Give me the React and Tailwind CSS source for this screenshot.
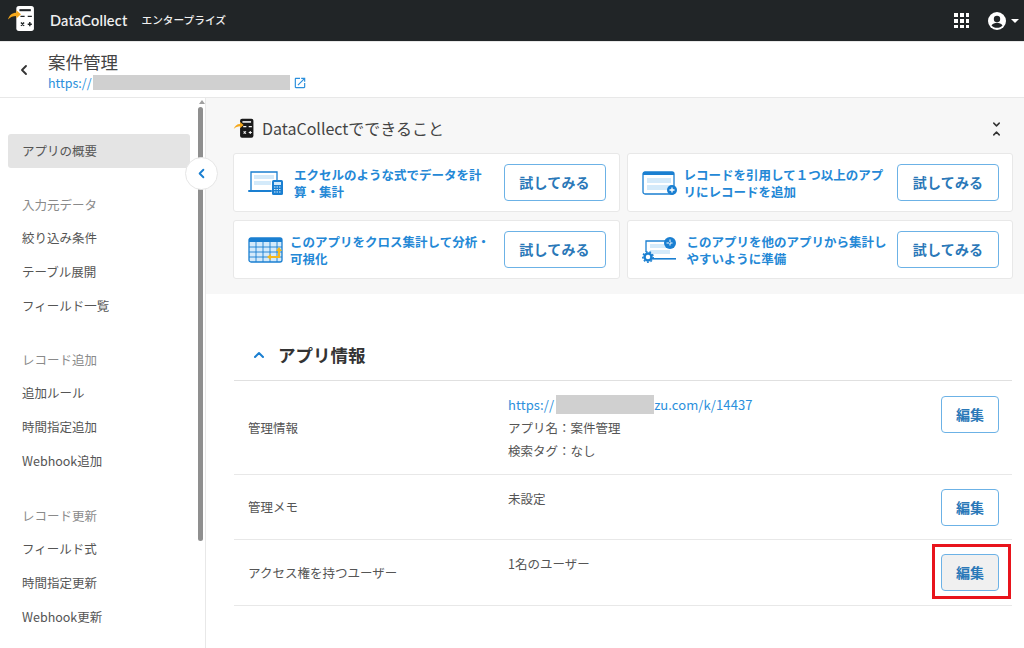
import React from 'react';
import { ChevronLeft, ChevronUp, ChevronDown } from 'lucide-react';

const jp = "font-['Noto_Sans_CJK_JP','Noto_Sans',sans-serif]";

function CalcLogo({ className, body = '#ffffff', key_ = '#212527' }) {
    return (
        <svg viewBox="0 0 28 28" className={className}>
            <rect x="9" y="1" width="17" height="24" rx="2.5" fill={body} />
            <rect x="12" y="4" width="11" height="2" fill={key_} />
            <path d="M13 11h4M20 11h4M13.5 17l3 3M16.5 17l-3 3M20 18.5h4M22 16.5v4" stroke={key_} strokeWidth="1.4" fill="none" />
            <path d="M1 14c1-4 4-6.500 8-6.500V5l4.500 4L9 13v-2.500c-3 0-6 1-8 3.500z" fill="#f5a81c" />
        </svg>
    );
}

function SheetIcon() {
    return (
        <svg viewBox="0 0 36 26" className="w-[36px] h-[26px] shrink-0">
            <path d="M3 20V2h26v8" stroke="#1a7fd1" strokeWidth="1.300" fill="none" />
            <rect x="6" y="5" width="20" height="4" fill="#d4eafa" />
            <rect x="6" y="11" width="17" height="4" fill="#d4eafa" />
            <rect x="0" y="20" width="24" height="2" rx="1" fill="#1a7fd1" />
            <rect x="24" y="10" width="11" height="15" rx="1.500" fill="#1a7fd1" />
            <rect x="26" y="12" width="7" height="3" fill="#d4eafa" />
            <path d="M26 17h7M26 19.500h7M26 22h7" stroke="#d4eafa" strokeWidth="1.200" strokeDasharray="1.500 1" />
        </svg>
    );
}

function RecordIcon() {
    return (
        <svg viewBox="0 0 36 26" className="w-[36px] h-[26px] shrink-0">
            <rect x="1" y="2" width="31" height="22" rx="2" fill="#ffffff" stroke="#1a7fd1" strokeWidth="1.300" />
            <rect x="1" y="2" width="31" height="3" fill="#1a7fd1" />
            <rect x="5" y="8" width="24" height="5" fill="#d4eafa" />
            <rect x="5" y="15" width="24" height="5" fill="#d4eafa" />
            <circle cx="30" cy="20" r="5" fill="#1a7fd1" />
            <path d="M27.500 20h5M30 17.500v5" stroke="#fff" strokeWidth="1.300" />
        </svg>
    );
}

function TableIcon() {
    return (
        <svg viewBox="0 0 36 26" className="w-[36px] h-[26px] shrink-0">
            <rect x="1" y="1" width="33" height="24" rx="2" fill="#d4eafa" stroke="#1a7fd1" strokeWidth="1.300" />
            <rect x="1" y="1" width="33" height="4" fill="#1a7fd1" />
            <path d="M1 10h33M1 15h33M1 20h33M8 5v20M15 5v20M22 5v20M29 5v20" stroke="#1a7fd1" strokeWidth="0.900" />
            <path d="M21 20h10v-7" stroke="#f5b81c" strokeWidth="2.200" fill="none" />
            <path d="M28 14l3-4 3 4zM23 17v6l-4-3z" fill="#f5b81c" />
        </svg>
    );
}

function PrepareIcon() {
    return (
        <svg viewBox="0 0 36 26" className="w-[36px] h-[26px] shrink-0">
            <path d="M4 15V4h22" stroke="#1a7fd1" strokeWidth="1.300" fill="none" />
            <rect x="8" y="7" width="20" height="4" fill="#d4eafa" />
            <rect x="8" y="13" width="20" height="4" fill="#d4eafa" />
            <rect x="8" y="21" width="26" height="1.600" fill="#1a7fd1" />
            <circle cx="28" cy="6" r="6" fill="#1a7fd1" />
            <path d="M24.500 6h7M28 2.500v7" stroke="#fff" strokeWidth="1" strokeDasharray="2.500 1" />
            <circle cx="6" cy="20" r="3.500" fill="none" stroke="#1a7fd1" strokeWidth="2.500" />
            <circle cx="6" cy="20" r="5.200" fill="none" stroke="#1a7fd1" strokeWidth="1.500" strokeDasharray="1.800 1.800" />
        </svg>
    );
}

function OpenInNewIcon() {
    return (
        <svg viewBox="0 0 24 24" className="w-[14px] h-[14px] ml-[3px] shrink-0" fill="#2b8fdc">
            <path d="M19 19H5V5h7V3H5c-1.110 0-2 .9-2 2v14c0 1.100.89 2 2 2h14c1.100 0 2-.9 2-2v-7h-2v7zM14 3v2h3.590l-9.830 9.830 1.410 1.410L19 6.410V10h2V3h-7z" />
        </svg>
    );
}

function GridIcon() {
    const cells = [0, 6, 12];
    return (
        <svg viewBox="0 0 15 15" className="w-[15px] h-[15px]">
            {cells.map((y) => cells.map((x) => <rect key={`${x}-${y}`} x={x} y={y} width="4" height="4" fill="#ffffff" />))}
        </svg>
    );
}

function UserIcon() {
    return (
        <svg viewBox="0 0 18 18" className="w-[18px] h-[18px]">
            <circle cx="9" cy="9" r="9" fill="#ffffff" />
            <circle cx="9" cy="7" r="3.200" fill="#212527" />
            <path d="M3.500 13.500c1-2 3.500-2.800 5.500-2.800s4.500.8 5.500 2.800c-1.300 1.500-3.300 2.300-5.500 2.300s-4.200-.8-5.500-2.300z" fill="#212527" />
        </svg>
    );
}

function Header() {
    return (
        <header className="h-[41px] shrink-0 bg-[#212527] flex items-center pl-[7px] pr-[5px] text-white">
            <CalcLogo className="w-[29px] h-[29px] mt-[-2px]" />
            <span className="ml-[14px] text-[14.500px] font-semibold font-['Lato','Noto_Sans',sans-serif] text-[#f0f0f0] tracking-[0.2px]">DataCollect</span>
            <span className={`ml-[14px] text-[10.700px] font-medium text-[#f0f0f0] ${jp}`}>エンタープライズ</span>
            <div className="ml-auto flex items-center">
                <GridIcon />
                <div className="ml-[19px]"><UserIcon /></div>
                <div className="ml-[5px] w-0 h-0 border-x-[4px] border-x-transparent border-t-[4px] border-t-white" />
            </div>
        </header>
    );
}

function TitleBar() {
    return (
        <div className="h-[57px] shrink-0 bg-white border-t border-b border-[#e8e8e8] flex items-center pl-[16px]">
            <ChevronLeft size={16} strokeWidth={2.800} className="text-[#333333]" />
            <div className="ml-[16px] mt-[2px]">
                <div className={`text-[17.500px] leading-[23px] text-[#444444] ${jp}`}>案件管理</div>
                <div className={`mt-[2px] flex items-center text-[12.500px] leading-[16px] text-[#2b8fdc] ${jp}`}>
                    <span>https://</span>
                    <span className="w-[197px] h-[15px] ml-[1px] mt-[-1px] bg-[#d0d0d0]" />
                    <OpenInNewIcon />
                </div>
            </div>
        </div>
    );
}

function SideItem({ label, active, muted }) {
    const color = muted ? 'text-[#8a8a8a]' : 'text-[#555555]';
    const bg = active ? 'bg-[#e4e4e4] rounded-[3px]' : '';
    const height = muted ? 'h-[32px]' : 'h-[34px]';
    return (
        <div className={`${height} w-[182px] ml-[8px] pl-[14px] flex items-center text-[12.500px] ${color} ${bg}`}>{label}</div>
    );
}

function Sidebar() {
    return (
        <aside className={`relative w-[206px] shrink-0 bg-white border-r border-[#e8e8e8] pt-[36px] ${jp}`}>
            <SideItem label="アプリの概要" active />
            <div className="h-[21px]" />
            <SideItem label="入力元データ" muted />
            <SideItem label="絞り込み条件" />
            <SideItem label="テーブル展開" />
            <SideItem label="フィールド一覧" />
            <div className="h-[21px]" />
            <SideItem label="レコード追加" muted />
            <SideItem label="追加ルール" />
            <SideItem label="時間指定追加" />
            <SideItem label="Webhook追加" />
            <div className="h-[22px]" />
            <SideItem label="レコード更新" muted />
            <SideItem label="フィールド式" />
            <SideItem label="時間指定更新" />
            <SideItem label="Webhook更新" />
            {/* scrollbar */}
            <div className="absolute left-[199px] top-[2px] w-0 h-0 border-x-[3px] border-x-transparent border-b-[4px] border-b-[#a0a0a0]" />
            <div className="absolute left-[198px] top-[9px] w-[5px] h-[434px] rounded-full bg-[#8f8f8f]" />
            {/* collapse button */}
            <div className="absolute left-[185px] top-[59px] w-[33px] h-[33px] rounded-full bg-white border border-[#e6e6e6] flex items-center justify-center z-10">
                <ChevronLeft size={15} strokeWidth={3} className="text-[#1a7fd1]" />
            </div>
        </aside>
    );
}

function TryButton({ label }) {
    return (
        <button className="w-[102px] h-[37px] shrink-0 rounded-[4px] border border-[#6cb2e6] bg-white text-[14px] font-bold tracking-[0.2px] text-[#2a78b8]">{label}</button>
    );
}

function FeatureCard({ icon, gap, children }) {
    return (
        <div className="h-[59px] bg-white border border-[#e8e8e8] rounded-[3px] flex items-center pl-[14px] pr-[13px]">
            {icon}
            <div className={`${gap} flex-1 whitespace-nowrap text-[12.500px] leading-[17px] font-bold text-[#2488d6]`}>{children}</div>
            <TryButton label="試してみる" />
        </div>
    );
}

function Features() {
    return (
        <section className="h-[196px] shrink-0 bg-[#f7f7f7] pl-[27px] pr-[11px] pt-[20px]">
            <div className="flex items-center h-[22px] pr-[11px]">
                <CalcLogo className="w-[22px] h-[22px]" body="#1a1a1a" key_="#f7f7f7" />
                <span className="ml-[7px] mt-[-2px] text-[16px] text-[#444444]">DataCollectでできること</span>
                <div className="ml-auto flex flex-col items-center text-[#333333]">
                    <ChevronDown size={11} strokeWidth={3.200} className="mb-[-1px]" />
                    <ChevronUp size={11} strokeWidth={3.200} className="mt-[-1px]" />
                </div>
            </div>
            <div className="mt-[13px] grid grid-cols-2 gap-x-[7px] gap-y-[8px]">
                <FeatureCard icon={<SheetIcon />} gap="ml-[10px]">エクセルのような式でデータを計<br />算・集計</FeatureCard>
                <FeatureCard icon={<RecordIcon />} gap="ml-[6px]">レコードを引用して１つ以上のアプ<br />リにレコードを追加</FeatureCard>
                <FeatureCard icon={<TableIcon />} gap="ml-[6px]">このアプリをクロス集計して分析・<br />可視化</FeatureCard>
                <FeatureCard icon={<PrepareIcon />} gap="ml-[9px]">このアプリを他のアプリから集計し<br />やすいように準備</FeatureCard>
            </div>
        </section>
    );
}

function EditButton({ highlighted, className = '' }) {
    return (
        <div className={`relative ${className}`}>
            <button className={`w-[58px] h-[37px] rounded-[4px] border border-[#6cb2e6] text-[14px] font-bold text-[#2a78b8] ${highlighted ? 'bg-[#f0f0f0]' : 'bg-white'}`}>編集</button>
            {highlighted && <div className="absolute left-[-9px] top-[-10px] w-[79px] h-[55px] border-[3px] border-[#e8141c]" />}
        </div>
    );
}

function InfoRow({ label, height, children, highlighted, topButton }) {
    return (
        <div className={`${height} border-b border-[#e8e8e8] flex items-center pl-[14px] pr-[13px] text-[12.500px] text-[#555555]`}>
            <div className="w-[260px] shrink-0 pt-[1px]">{label}</div>
            <div className="self-start flex-1 pt-[12px] leading-[23px]">{children}</div>
            <EditButton highlighted={highlighted} className={topButton ? 'self-start mt-[15px]' : ''} />
        </div>
    );
}

function AppInfo() {
    return (
        <section className="pl-[28px] pr-[12px] pt-[47px]">
            <div className="h-[28px] box-content pb-[11px] flex items-center border-b border-[#e0e0e0]">
                <ChevronUp size={16} strokeWidth={3} className="ml-[17px] text-[#1a7fd1]" />
                <h2 className="ml-[11px] text-[17.500px] font-bold text-[#333333]">アプリ情報</h2>
            </div>
            <InfoRow label="管理情報" height="h-[94px]" topButton>
                <div className="flex items-center text-[13px] tracking-[0.1px] text-[#2b8fdc]">
                    <span>https://</span>
                    <span className="w-[98px] h-[19px] ml-[2px] bg-[#d0d0d0]" />
                    <span>zu.com/k/14437</span>
                </div>
                <div>アプリ名：案件管理</div>
                <div>検索タグ：なし</div>
            </InfoRow>
            <InfoRow label="管理メモ" height="h-[65px]">未設定</InfoRow>
            <InfoRow label="アクセス権を持つユーザー" height="h-[66px]" highlighted>1名のユーザー</InfoRow>
        </section>
    );
}

export default function App() {
    return (
        <div className={`w-[1024px] h-[648px] overflow-hidden flex flex-col bg-white ${jp}`}>
            <Header />
            <TitleBar />
            <div className="flex flex-1 min-h-0">
                <Sidebar />
                <main className="flex-1 min-w-0 flex flex-col">
                    <Features />
                    <AppInfo />
                </main>
            </div>
        </div>
    );
}
